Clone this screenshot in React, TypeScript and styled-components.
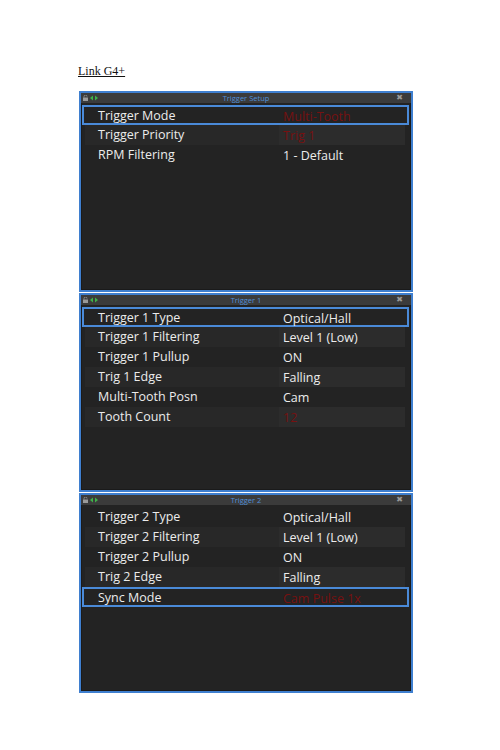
import React from 'react';
import styled, { createGlobalStyle } from 'styled-components';

const GlobalStyle = createGlobalStyle`
  body {
    margin: 0;
    background: #ffffff;
  }
`;

const Page = styled.div`
  width: 500px;
  height: 750px;
  padding: 64px 0 0 79px;
  box-sizing: border-box;
  display: flex;
  flex-direction: column;
`;

const Heading = styled.div`
  font-family: 'Liberation Serif', serif;
  font-size: 12px;
  color: #111;
  text-decoration: underline;
  margin: 0 0 13px -1px;
  line-height: 14px;
`;

const Stack = styled.div`
  display: flex;
  flex-direction: column;
  gap: 1px;
`;

const Panel = styled.div<{ $height: number }>`
  width: 334px;
  height: ${({ $height }) => $height}px;
  box-sizing: border-box;
  border: 2px solid #3f7fcf;
  background: #232323;
  display: flex;
  flex-direction: column;
  box-shadow: inset 0 0 0 1px #1a1a1a;
`;

const TitleBar = styled.div`
  height: 10px;
  background: #3b3b3b;
  display: flex;
  align-items: center;
  padding: 0 8px 0 2px;
  position: relative;
`;

const TitleText = styled.span`
  position: absolute;
  left: 0;
  right: 0;
  text-align: center;
  font-family: 'Open Sans', sans-serif;
  font-size: 7.5px;
  color: #4f8fd8;
  line-height: 10px;
  pointer-events: none;
`;

const Icons = styled.div`
  display: flex;
  align-items: center;
  gap: 1px;
`;

const Close = styled.span`
  margin-left: auto;
  font-family: 'DejaVu Sans', sans-serif;
  font-size: 8px;
  color: #9a9a9a;
  line-height: 10px;
  font-weight: bold;
`;

const Body = styled.div`
  padding: 2px 0 0 0;
  display: flex;
  flex-direction: column;
`;

const Row = styled.div<{ $selected?: boolean; $alt?: boolean }>`
  height: 20px;
  box-sizing: border-box;
  margin: 0 ${({ $selected }) => ($selected ? '2px' : '6px')} 0 ${({ $selected }) => ($selected ? '1px' : '4px')};
  border: ${({ $selected }) => ($selected ? '2px solid #4a8ad8' : 'none')};
  background: ${({ $alt }) => ($alt ? '#282828' : '#232323')};
  display: grid;
  grid-template-columns: ${({ $selected }) => ($selected ? '195px 1fr' : '194px 1fr')};
  align-items: center;
  font-family: 'Open Sans', sans-serif;
  font-size: 12.5px;
  color: #ececec;
`;

const Label = styled.span<{ $selected?: boolean }>`
  padding-left: ${({ $selected }) => ($selected ? '14px' : '13px')};
  white-space: nowrap;
  line-height: 18px;
`;

const Value = styled.span<{ $red?: boolean; $alt?: boolean }>`
  height: 100%;
  display: flex;
  align-items: center;
  padding-left: 4px;
  background: ${({ $alt }) => ($alt ? '#2c2c2c' : 'transparent')};
  color: ${({ $red }) => ($red ? '#761111' : '#ececec')};
  white-space: nowrap;
`;

type Item = { label: string; value: string; red?: boolean; selected?: boolean };

const LockIcon = () => (
  <svg width="5" height="6" viewBox="0 0 5 6">
    <rect x="0" y="2.5" width="5" height="3.5" fill="#9a9a9a" />
    <path d="M1 2.5V1.5a1.5 1.5 0 0 1 3 0" stroke="#9a9a9a" strokeWidth="0.8" fill="none" />
  </svg>
);

const Arrows = () => (
  <svg width="10" height="6" viewBox="0 0 10 6">
    <path d="M4 0.5 L1 3 L4 5.5 Z" fill="#3fb24a" />
    <path d="M6 0.5 L9 3 L6 5.5 Z" fill="#3fb24a" />
  </svg>
);

const Window: React.FC<{ title: string; height: number; items: Item[] }> = ({ title, height, items }) => (
  <Panel $height={height}>
    <TitleBar>
      <Icons>
        <LockIcon />
        <Arrows />
      </Icons>
      <TitleText>{title}</TitleText>
      <Close>✖</Close>
    </TitleBar>
    <Body>
      {items.map((it, i) => {
        const alt = i % 2 === 1 && !it.selected;
        return (
          <Row key={it.label} $selected={it.selected} $alt={alt}>
            <Label $selected={it.selected}>{it.label}</Label>
            <Value $red={it.red} $alt={alt}>{it.value}</Value>
          </Row>
        );
      })}
    </Body>
  </Panel>
);

const setup: Item[] = [
  { label: 'Trigger Mode', value: 'Multi-Tooth', red: true, selected: true },
  { label: 'Trigger Priority', value: 'Trig 1', red: true },
  { label: 'RPM Filtering', value: '1 - Default' },
];

const trigger1: Item[] = [
  { label: 'Trigger 1 Type', value: 'Optical/Hall', selected: true },
  { label: 'Trigger 1 Filtering', value: 'Level 1 (Low)' },
  { label: 'Trigger 1 Pullup', value: 'ON' },
  { label: 'Trig 1 Edge', value: 'Falling' },
  { label: 'Multi-Tooth Posn', value: 'Cam' },
  { label: 'Tooth Count', value: '12', red: true },
];

const trigger2: Item[] = [
  { label: 'Trigger 2 Type', value: 'Optical/Hall' },
  { label: 'Trigger 2 Filtering', value: 'Level 1 (Low)' },
  { label: 'Trigger 2 Pullup', value: 'ON' },
  { label: 'Trig 2 Edge', value: 'Falling' },
  { label: 'Sync Mode', value: 'Cam Pulse 1x', red: true, selected: true },
];

export default function App() {
  return (
    <>
      <GlobalStyle />
      <Page>
        <Heading>Link G4+</Heading>
        <Stack>
          <Window title="Trigger Setup" height={201} items={setup} />
          <Window title="Trigger 1" height={199} items={trigger1} />
          <Window title="Trigger 2" height={200} items={trigger2} />
        </Stack>
      </Page>
    </>
  );
}
